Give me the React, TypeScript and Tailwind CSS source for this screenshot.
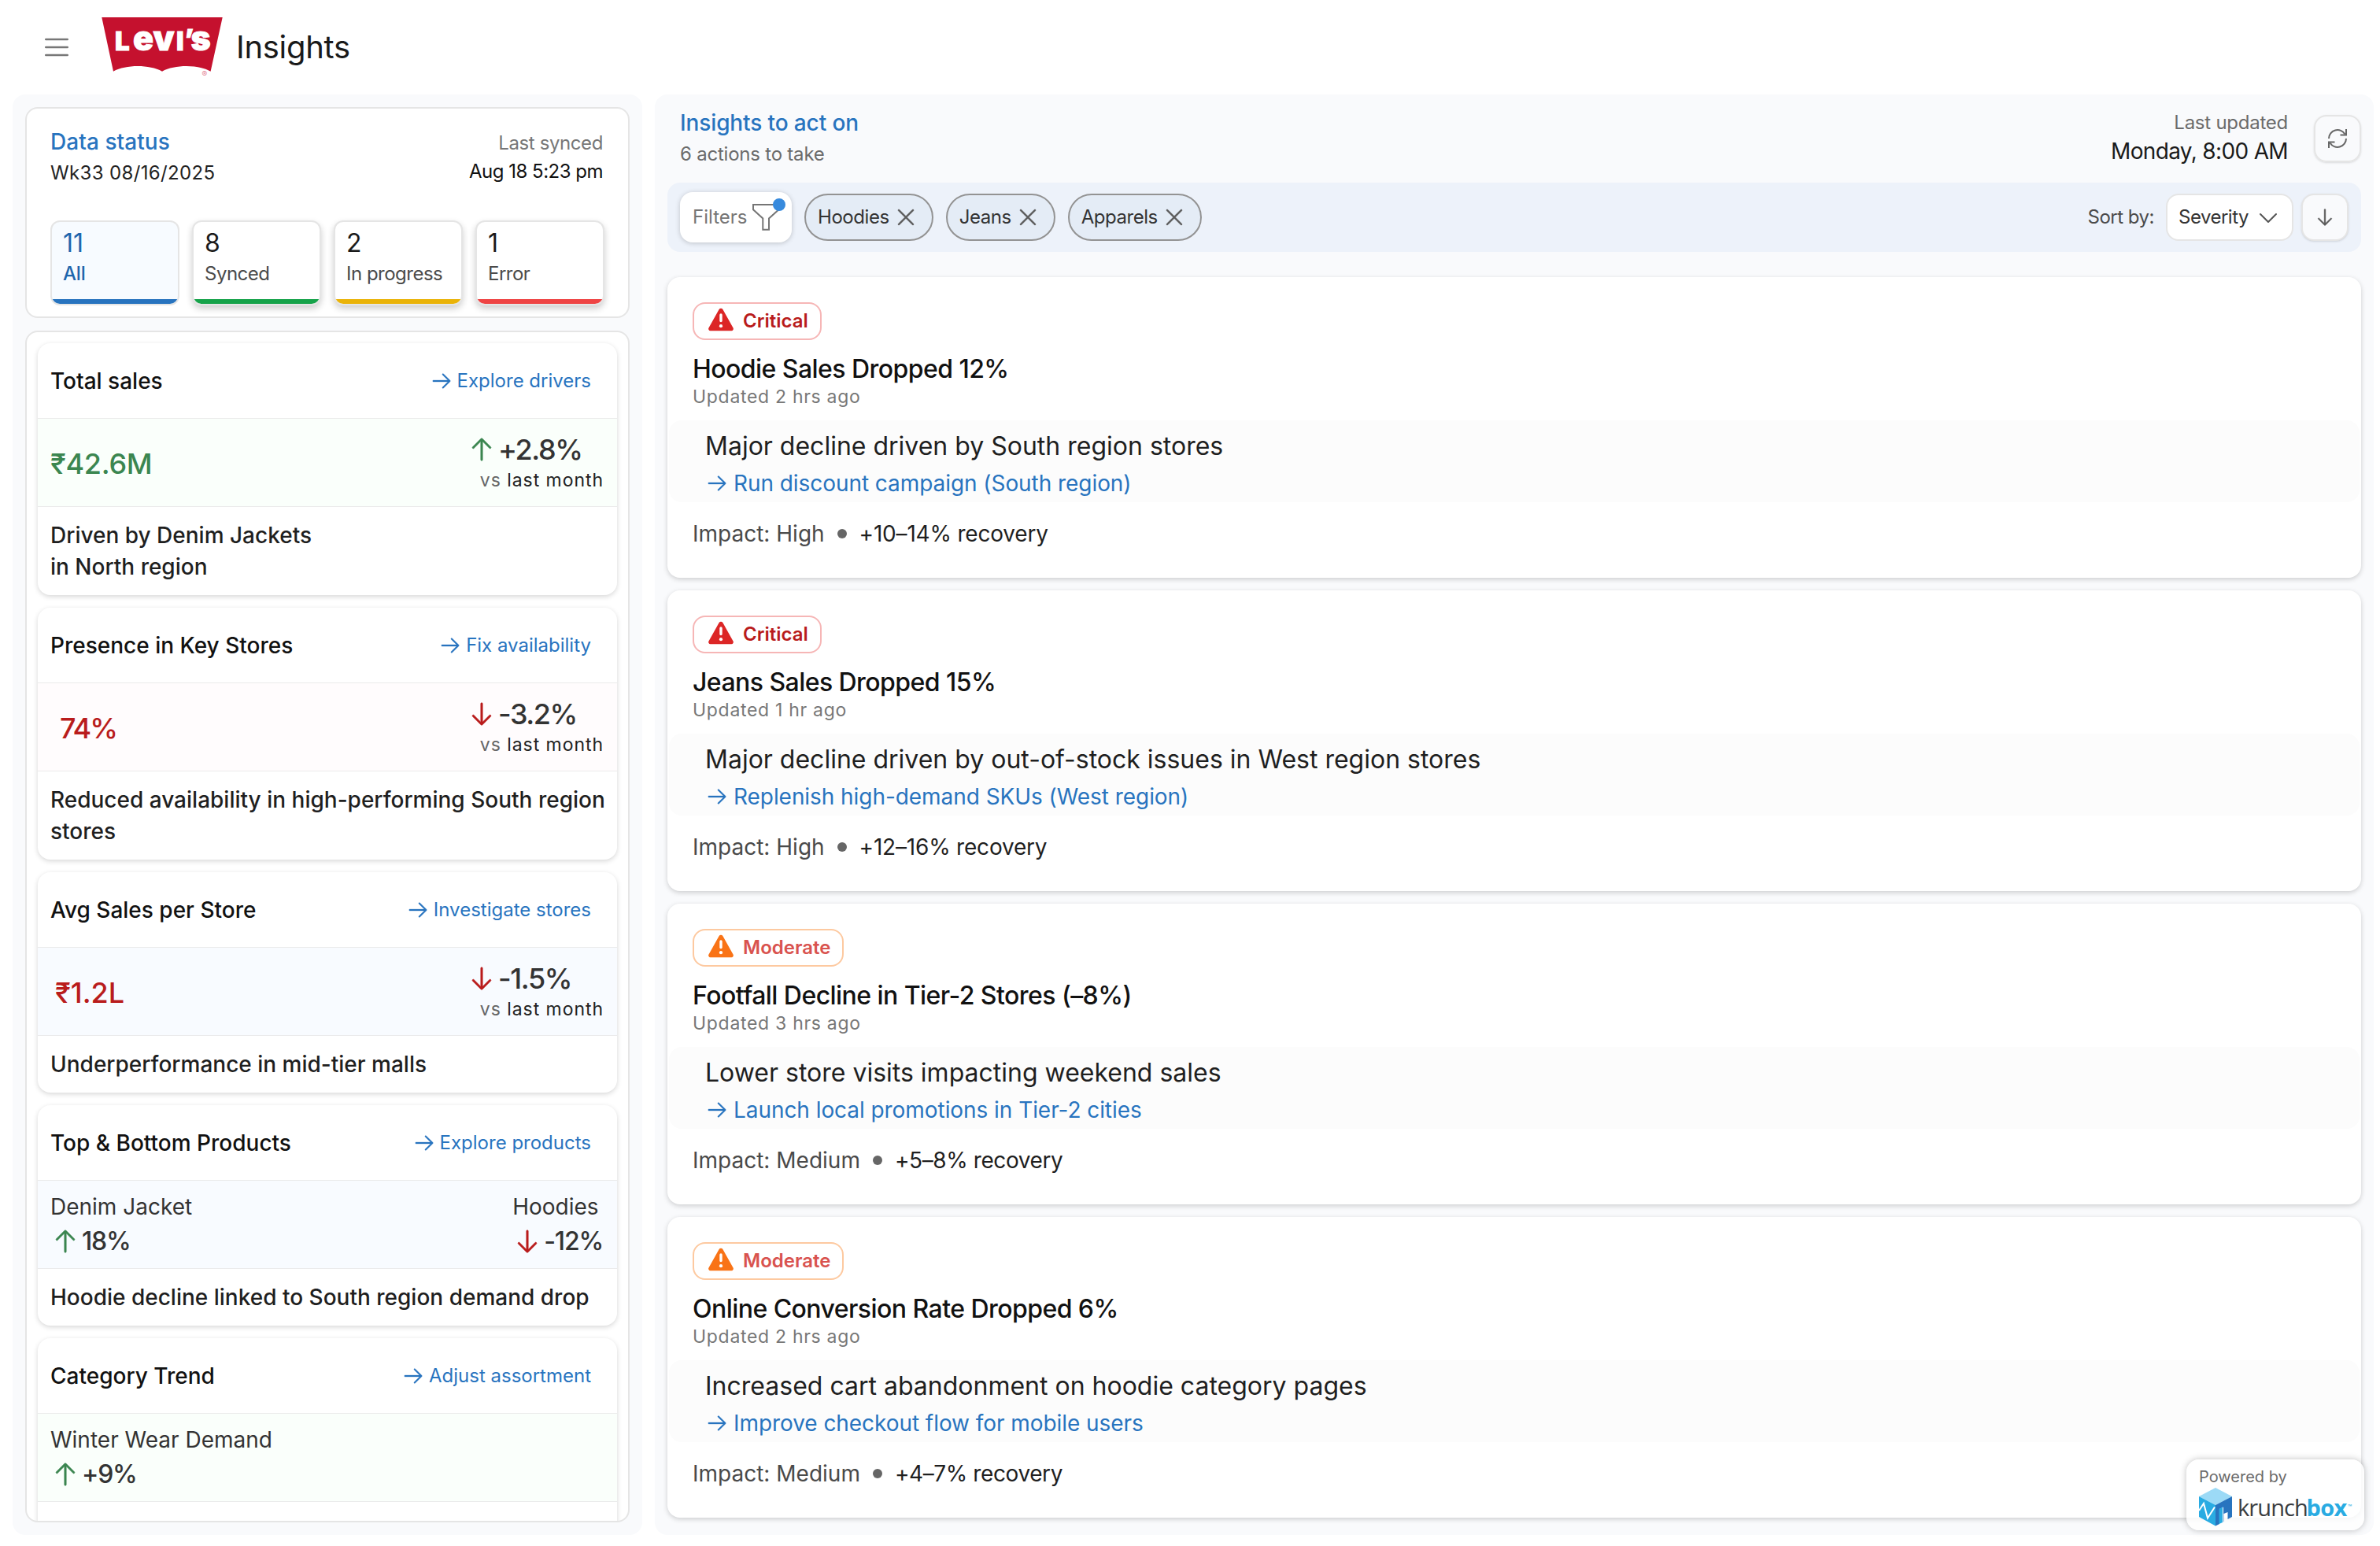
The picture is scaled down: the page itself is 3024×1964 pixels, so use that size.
import React from 'react';
import { PiArrowRight, PiArrowUp, PiArrowDown, PiCaretDown, PiX } from 'react-icons/pi';

type Trend = 'up' | 'down';
type Severity = 'critical' | 'moderate';

interface StatusTile {
  count: string;
  label: string;
  bar: string;
  active?: boolean;
}

interface Metric {
  label: string;
  trend: Trend;
  value: string;
}

interface Kpi {
  title: string;
  link: string;
  band: string;
  note: React.ReactNode;
  value?: string;
  valueClass?: string;
  trend?: Trend;
  delta?: string;
  metrics?: Metric[];
}

interface Insight {
  severity: Severity;
  title: string;
  updated: string;
  cause: string;
  action: string;
  impact: string;
  recovery: string;
}

// ─── Data ─────────────────────────────────────────────────────────────────────

const TILES: StatusTile[] = [
  { count: '11', label: 'All', bar: 'bg-[#2874bf]', active: true },
  { count: '8', label: 'Synced', bar: 'bg-[#16a34a]' },
  { count: '2', label: 'In progress', bar: 'bg-[#eab308]' },
  { count: '1', label: 'Error', bar: 'bg-[#ef4444]' },
];

const KPIS: Kpi[] = [
  {
    title: 'Total sales',
    link: 'Explore drivers',
    band: 'bg-[#fafffb]',
    value: '₹42.6M',
    valueClass: 'text-[#3b8650] tracking-[-0.3px]',
    trend: 'up',
    delta: '+2.8%',
    note: <>Driven by Denim Jackets<br />in North region</>,
  },
  {
    title: 'Presence in Key Stores',
    link: 'Fix availability',
    band: 'bg-[#fffcfd]',
    value: '74%',
    valueClass: 'text-[#b91c1c] tracking-[-2px]',
    trend: 'down',
    delta: '-3.2%',
    note: <>Reduced availability in high-performing South region<br />stores</>,
  },
  {
    title: 'Avg Sales per Store',
    link: 'Investigate stores',
    band: 'bg-[#f8fbff]',
    value: '₹1.2L',
    valueClass: 'text-[#b91c1c] pl-1',
    trend: 'down',
    delta: '-1.5%',
    note: 'Underperformance in mid-tier malls',
  },
  {
    title: 'Top & Bottom Products',
    link: 'Explore products',
    band: 'bg-[#f8fbff]',
    metrics: [
      { label: 'Denim Jacket', trend: 'up', value: '18%' },
      { label: 'Hoodies', trend: 'down', value: '-12%' },
    ],
    note: 'Hoodie decline linked to South region demand drop',
  },
  {
    title: 'Category Trend',
    link: 'Adjust assortment',
    band: 'bg-[#fafffb]',
    metrics: [{ label: 'Winter Wear Demand', trend: 'up', value: '+9%' }],
    note: '',
  },
];

const FILTERS = ['Hoodies', 'Jeans', 'Apparels'];

const INSIGHTS: Insight[] = [
  {
    severity: 'critical',
    title: 'Hoodie Sales Dropped 12%',
    updated: 'Updated 2 hrs ago',
    cause: 'Major decline driven by South region stores',
    action: 'Run discount campaign (South region)',
    impact: 'Impact: High',
    recovery: '+10–14% recovery',
  },
  {
    severity: 'critical',
    title: 'Jeans Sales Dropped 15%',
    updated: 'Updated 1 hr ago',
    cause: 'Major decline driven by out-of-stock issues in West region stores',
    action: 'Replenish high-demand SKUs (West region)',
    impact: 'Impact: High',
    recovery: '+12–16% recovery',
  },
  {
    severity: 'moderate',
    title: 'Footfall Decline in Tier-2 Stores (–8%)',
    updated: 'Updated 3 hrs ago',
    cause: 'Lower store visits impacting weekend sales',
    action: 'Launch local promotions in Tier-2 cities',
    impact: 'Impact: Medium',
    recovery: '+5–8% recovery',
  },
  {
    severity: 'moderate',
    title: 'Online Conversion Rate Dropped 6%',
    updated: 'Updated 2 hrs ago',
    cause: 'Increased cart abandonment on hoodie category pages',
    action: 'Improve checkout flow for mobile users',
    impact: 'Impact: Medium',
    recovery: '+4–7% recovery',
  },
];

const SEVERITY: Record<Severity, { label: string; border: string; icon: string; text: string; recovery: string }> = {
  critical: {
    label: 'Critical',
    border: 'border-[#f6b6b6]',
    icon: 'text-[#dc2626]',
    text: 'text-[#b91c1c]',
    recovery: 'tracking-[-0.2px]',
  },
  moderate: {
    label: 'Moderate',
    border: 'border-[#fdc9a0]',
    icon: 'text-[#f97316]',
    text: 'text-[#d9534f]',
    recovery: 'tracking-[-0.4px]',
  },
};

// ─── Logos and icons ──────────────────────────────────────────────────────────

function BrandLogo() {
  return (
    <svg width="156" height="88" viewBox="0 -4 156 88" className="shrink-0">
      <path d="M1.300 2H154.700L139.600 70.700C124 61.800 94 61.800 78 70.700C62 61.800 32 61.800 16 70.700Z" fill="#c5112e" />
      <g fill="#fff" stroke="#fff" strokeWidth="0.900" fontFamily="Inter, sans-serif" fontWeight="900">
        <text y="44.300">
          <tspan x="18" fontSize="33">L</tspan>
          <tspan x="41" fontSize="43">e</tspan>
          <tspan x="66.500" fontSize="43">v</tspan>
          <tspan x="96" fontSize="33">I</tspan>
          <tspan x="106.500" dy="-3" fontSize="33">’</tspan>
          <tspan x="114.500" dy="3" fontSize="43">s</tspan>
        </text>
      </g>
      <text x="128.500" y="78" fontSize="10" fill="#e58a9a" fontFamily="Inter, sans-serif">®</text>
    </svg>
  );
}

function MenuIcon() {
  return (
    <svg width="32" height="24" viewBox="0 0 32 24" fill="none" stroke="#777" strokeWidth="2.600" strokeLinecap="round">
      <path d="M2.300 2H29.700M2.300 12H29.700M2.300 22H29.700" />
    </svg>
  );
}

function FunnelIcon() {
  return (
    <svg width="36" height="36" viewBox="0 0 36 36" fill="none" stroke="#757575" strokeWidth="2">
      <path d="M2 2H34.500V8.300L22 19.400V33.700H14.300V19.400L2 8.300Z" />
    </svg>
  );
}

function RefreshIcon() {
  return (
    <svg width="26" height="26" viewBox="0 0 26 26" fill="none" stroke="#666" strokeWidth="2">
      <path d="M2 13A11 11 0 0 1 22.500 7.500M24 13A11 11 0 0 1 3.500 18.500" />
      <path d="M24 1V8.500H16.500M2 25V17.500H9.500" />
    </svg>
  );
}

function WarningIcon() {
  return (
    <svg width="34" height="30" viewBox="0 0 34 30">
      <path
        d="M14.500 2.200a2.900 2.900 0 0 1 5 0L32.500 25.600a2.400 2.400 0 0 1-2.100 3.600H3.600a2.400 2.400 0 0 1-2.100-3.600Z"
        fill="currentColor"
      />
      <path d="M17 9V16.500" stroke="#fff" strokeWidth="3.400" strokeLinecap="round" />
      <circle cx="17" cy="23.200" r="2.100" fill="#fff" />
    </svg>
  );
}

function KrunchboxLogo() {
  return (
    <svg width="200" height="50" viewBox="0 0 200 50">
      <path d="M0 11L21 0L42 11L21 22Z" fill="#9cdaf6" />
      <path d="M0 11L21 22V48.500L0 37Z" fill="#29abe2" />
      <path d="M42 11L21 22V48.500L26 46V27L31 24.500V43.500L31.500 43V33L36.500 31V40L42 37Z" fill="#2874bf" />
      <path d="M25.500 27L30 24.500V44L25.500 46Z" fill="#29abe2" />
      <path d="M0 29L6 20L11 38.500L20 24.500" fill="none" stroke="#fff" strokeWidth="2" />
      <g fontFamily="'Open Sans', 'Noto Sans', sans-serif" fontSize="29">
        <text y="36" fill="#3a3d40">
          <tspan x="49" letterSpacing="-0.900">krunch</tspan>
          <tspan x="136.500" fill="#29abe2" fontWeight="700" letterSpacing="-0.700">box</tspan>
        </text>
        <text x="189" y="26" fill="#29abe2" fontSize="7">™</text>
      </g>
    </svg>
  );
}

function TrendArrow({ trend }: { trend: Trend }) {
  return trend === 'up'
    ? <PiArrowUp size={38} strokeWidth={4} className="shrink-0 text-[#3b8650]" />
    : <PiArrowDown size={38} strokeWidth={4} className="shrink-0 text-[#b91c1c]" />;
}

// ─── Left column ──────────────────────────────────────────────────────────────

function DataStatus() {
  return (
    <section className="h-[268px] rounded-2xl border-2 border-[#e5e5e5] bg-white px-[30px] pt-[22px]">
      <div className="flex h-[120px] justify-between">
        <div className="flex flex-col gap-1">
          <h2 className="text-[28px]/[40px] font-medium tracking-[0.05px] text-[#2874bf]">Data status</h2>
          <p className="text-2xl/8 tracking-[0.35px] text-[#222]">Wk33 08/16/2025</p>
        </div>
        <div className="pt-1 pr-0.5 text-right text-2xl/9">
          <p className="tracking-[-0.4px] text-[#777]">Last synced</p>
          <p className="tracking-[-0.5px] text-[#111]">Aug 18 5:23 pm</p>
        </div>
      </div>
      <div className="grid grid-cols-4 gap-4">
        {TILES.map(t => (
          <div
            key={t.label}
            className={[
              'flex h-[108px] flex-col overflow-hidden rounded-xl border-2 border-[#e5e5e5]',
              t.active ? 'bg-[#f7fbff] text-[#1f66ad]' : 'bg-white text-[#1a1a1a] shadow-[0_4px_8px_rgba(0,0,0,0.2)]',
            ].join(' ')}
          >
            <div className="flex flex-1 flex-col gap-[3px] px-[14px] pt-[7px]">
              <span className="text-[32px]/[40px]">{t.count}</span>
              <span
                className={[
                  'whitespace-nowrap text-2xl/8',
                  t.active ? 'font-medium tracking-[-0.2px]' : 'tracking-[-0.5px] text-[#4a4a4a]',
                ].join(' ')}
              >
                {t.label}
              </span>
            </div>
            <div className={`h-1.5 ${t.bar}`} />
          </div>
        ))}
      </div>
    </section>
  );
}

function KpiCard({ kpi }: { kpi: Kpi }) {
  return (
    <article className="shrink-0 overflow-hidden rounded-2xl bg-white shadow-[0_2px_6px_rgba(0,0,0,0.16)]">
      <header className="flex h-24 items-center justify-between border-b border-[#ebebeb] pr-[33px] pl-4">
        <h3 className="text-[28px]/[40px] font-medium text-[#111]">{kpi.title}</h3>
        <a className="flex items-center gap-[5px] text-2xl text-[#2874bf]">
          <PiArrowRight size={30} strokeWidth={3} />
          {kpi.link}
        </a>
      </header>
      <div className={`flex h-28 items-center justify-between border-b border-[#ebebeb] px-4 ${kpi.band}`}>
        {kpi.value && kpi.trend && (
          <>
            <span className={`min-w-24 pt-0.5 text-center text-4xl font-medium ${kpi.valueClass}`}>{kpi.value}</span>
            <div className="flex w-[175px] flex-col pt-0.5">
              <span className="flex items-center gap-0.5 text-4xl/[42px] font-medium tracking-[-1.4px] text-[#333]">
                <TrendArrow trend={kpi.trend} />
                {kpi.delta}
              </span>
              <span className="pr-px text-right text-[23px]/[36px] tracking-[0.95px] text-[#222]">
                <span className="text-[#666]">vs</span> last month
              </span>
            </div>
          </>
        )}
        {kpi.metrics?.map(m => (
          <div key={m.label} className="flex flex-col pt-0.5 pr-0.5">
            <span className="text-[28px]/[40px] text-[#333]">{m.label}</span>
            <span className="flex items-center gap-0.5 text-[32px]/[48px] font-medium tracking-[-1.2px] text-[#333]">
              <TrendArrow trend={m.trend} />
              {m.value}
            </span>
          </div>
        ))}
      </div>
      <p className="min-h-[72px] px-4 py-4 text-[28px]/[40px] font-medium whitespace-nowrap text-[#1f1f1f]">{kpi.note}</p>
    </article>
  );
}

// ─── Right column ─────────────────────────────────────────────────────────────

function FilterBar() {
  return (
    <div className="flex h-[88px] items-center gap-4 rounded-2xl bg-[#edf2fa] px-4 text-2xl tracking-[-0.5px] text-[#333]">
      <button className="relative flex h-16 w-[142px] items-center gap-1.5 rounded-2xl bg-white pl-4 tracking-normal text-[#757575] shadow-[0_1px_6px_rgba(0,0,0,0.2)]">
        Filters
        <FunnelIcon />
        <span className="absolute top-2 right-2 size-4 rounded-full bg-[#378add]" />
      </button>
      {FILTERS.map(f => (
        <button
          key={f}
          className="flex h-[60px] items-center gap-[5px] rounded-full border-2 border-[#939393] bg-[#e4ecf6] pr-[17px] pl-[15px] tracking-[-0.45px]"
        >
          {f}
          <PiX size={32} strokeWidth={4} className="text-[#5a5a5a]" />
        </button>
      ))}
      <div className="ml-auto flex items-center">
        <span className="mr-[15px] text-[#4a4a4a]">Sort by:</span>
        <button className="mr-2.5 flex h-[60px] w-[162px] items-center justify-between rounded-2xl border-2 border-[#e5e5e5] bg-white pr-3.5 pl-3.5">
          Severity
          <PiCaretDown size={32} className="text-[#555]" />
        </button>
        <button className="flex size-[60px] items-center justify-center rounded-2xl border-2 border-[#e5e5e5] bg-[#f9fafc] shadow-sm">
          <PiArrowDown size={28} strokeWidth={4} className="text-[#5a5a5a]" />
        </button>
      </div>
    </div>
  );
}

function InsightCard({ insight }: { insight: Insight }) {
  const s = SEVERITY[insight.severity];
  return (
    <article className="h-[382px] rounded-2xl bg-white px-0.5 pt-8 shadow-[0_2px_6px_rgba(0,0,0,0.18)]">
      <div className="px-[30px]">
        <span className={`flex h-12 w-fit items-center gap-[11px] rounded-2xl border-2 pr-[15px] pl-[17px] ${s.border}`}>
          <span className={`mb-1 ${s.icon}`}><WarningIcon /></span>
          <span className={`text-2xl font-semibold ${s.text}`}>{s.label}</span>
        </span>
        <h3 className="mt-[17px] text-[32px]/[40px] font-medium tracking-[-0.55px] text-[#111]">{insight.title}</h3>
        <p className="text-[23px]/[30px] tracking-[0.7px] text-[#777]">{insight.updated}</p>
      </div>
      <div className="mt-[15px] h-[104px] rounded-2xl bg-[#fcfcfc] pt-[9px] pl-[46px]">
        <p className="text-[32px]/[48px] text-[#1f1f1f]">{insight.cause}</p>
        <a className="flex h-[45px] items-center gap-1.5 text-[28px] tracking-[-0.06px] text-[#2874bf]">
          <PiArrowRight size={30} strokeWidth={3} />
          {insight.action}
        </a>
      </div>
      <div className="mt-5 flex items-center px-[30px] text-[28px]/[40px] text-[#1f1f1f]">
        <span className="text-[#4a4a4a]">{insight.impact}</span>
        <span className="mr-4 ml-4 size-3 rounded-full bg-[#666]" />
        <span className={s.recovery}>{insight.recovery}</span>
      </div>
    </article>
  );
}

export default function App() {
  return (
    <div className="flex h-[1964px] w-[3024px] flex-col overflow-hidden bg-white font-['Inter','Liberation_Sans',sans-serif]">
      <header className="flex h-[120px] shrink-0 items-center pl-14">
        <MenuIcon />
        <div className="ml-10"><BrandLogo /></div>
        <h1 className="ml-4 text-[40px] tracking-[-0.3px] text-[#1a1a1a]">Insights</h1>
      </header>

      <main className="flex h-[1830px] gap-4 pr-2 pl-4">
        <aside className="flex w-[800px] shrink-0 flex-col gap-4 rounded-2xl bg-[#f9fafc] p-4">
          <DataStatus />
          <section className="flex min-h-0 flex-1 flex-col gap-4 overflow-hidden rounded-2xl border-2 border-[#e5e5e5] bg-white p-3.5">
            {KPIS.map(k => <KpiCard key={k.title} kpi={k} />)}
          </section>
        </aside>

        <section className="relative flex min-w-0 flex-1 flex-col rounded-2xl bg-[#f9fafc] px-4">
          <div className="flex h-28 shrink-0 justify-between pl-4">
            <div className="pt-4">
              <h2 className="text-[28px]/[40px] font-medium tracking-[-0.12px] text-[#2874bf]">Insights to act on</h2>
              <p className="mt-px text-2xl/[38px] tracking-[-0.22px] text-[#6b6b6b]">6 actions to take</p>
            </div>
            <div className="flex gap-[33px] pt-[17px]">
              <div className="pt-px text-right">
                <p className="text-2xl/9 tracking-[-0.25px] text-[#6b6b6b]">Last updated</p>
                <p className="text-[28px]/[37px] tracking-[-0.65px] text-[#1a1a1a]">Monday, 8:00 AM</p>
              </div>
              <button className="mt-[9px] flex size-[60px] items-center justify-center rounded-2xl border-2 border-[#e5e5e5] shadow-sm">
                <RefreshIcon />
              </button>
            </div>
          </div>
          <FilterBar />
          <div className="mt-8 flex flex-col gap-4">
            {INSIGHTS.map(i => <InsightCard key={i.title} insight={i} />)}
          </div>

          {/* Floating vendor badge */}
          <div className="absolute right-3 bottom-1.5 h-[90px] w-[226px] rounded-2xl bg-white/80 pt-2 pl-4 shadow-[0_0_8px_rgba(0,0,0,0.25)]">
            <p className="text-xl/7 text-[#6b6b6b]">Powered by</p>
            <KrunchboxLogo />
          </div>
        </section>
      </main>
    </div>
  );
}
